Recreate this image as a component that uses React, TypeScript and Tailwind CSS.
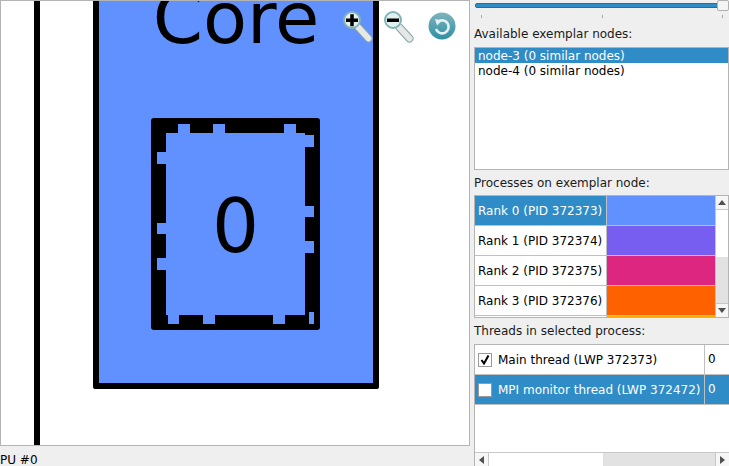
const F = "font-['DejaVu_Sans',sans-serif]";

const notches = [
  [178, 124, 12, 9], [213, 124, 12, 9], [284, 124, 12, 9],
  [157, 152, 9, 12], [157, 223, 9, 11], [157, 258, 9, 12],
  [305, 135, 9, 12], [305, 206, 9, 11], [305, 241, 9, 12],
  [168, 315, 11, 9], [203, 315, 12, 9], [273, 315, 12, 9], [309, 312, 5, 12],
];

function Lens({ minus }: { minus?: boolean }) {
  return (
    <svg width="32" height="34" viewBox="0 0 32 34" className="block">
      <path d="M16.5 17.5 L26.5 28.5" stroke="#7fa3a8" strokeWidth="8" strokeLinecap="round" />
      <path d="M16.5 17.5 L26.5 28.5" stroke="#e6e8e6" strokeWidth="6" strokeLinecap="round" />
      <circle cx="10" cy="10" r="8" fill="#e3f0f0" stroke="#84b4b9" strokeWidth="2" />
      <rect x="4" y="8.5" width="12" height="3.5" fill="#000" />
      {!minus && <rect x="8.25" y="4.25" width="3.5" height="12" fill="#000" />}
    </svg>
  );
}

function Refresh() {
  return (
    <svg width="28" height="28" viewBox="0 0 28 28" className="block">
      <defs>
        <linearGradient id="g" x1="0" y1="0" x2="0" y2="1">
          <stop offset="0" stopColor="#7fb4bd" />
          <stop offset="1" stopColor="#2f8fa3" />
        </linearGradient>
      </defs>
      <circle cx="14" cy="14" r="13.5" fill="url(#g)" />
      <path d="M10.5 9.5 A6.5 6.5 0 1 1 8 17" fill="none" stroke="#e4f0f2" strokeWidth="2.6" />
      <path d="M7 7 L14 8.5 L9 13.5 Z" fill="#e4f0f2" />
    </svg>
  );
}

function Rank({ n, pid, color, sel }: { n: number; pid: number; color: string; sel?: boolean }) {
  return (
    <div className="flex h-[30px] shrink-0 border-b border-[#c0c0c0]">
      <div className={`w-[132px] border-r border-[#c0c0c0] pl-[3px] leading-[31px] whitespace-nowrap ${sel ? "bg-[#308cc6] text-white" : "bg-white text-black"}`}>
        Rank {n} (PID {pid})
      </div>
      <div className="flex-1" style={{ backgroundColor: color }} />
    </div>
  );
}

function Arrow({ d }: { d: "up" | "down" | "left" | "right" }) {
  const p = { up: "M0 5 L4 0 L8 5 Z", down: "M0 0 L8 0 L4 5 Z", left: "M5 0 L5 8 L0 4 Z", right: "M0 0 L0 8 L5 4 Z" }[d];
  return (
    <svg width={d === "up" || d === "down" ? 8 : 5} height={d === "up" || d === "down" ? 5 : 8} className="block">
      <path d={p} fill="#505050" />
    </svg>
  );
}

function Thread({ label, checked, sel }: { label: string; checked?: boolean; sel?: boolean }) {
  return (
    <div className={`flex h-[30px] shrink-0 border-b border-[#c0c0c0] ${sel ? "bg-[#308cc6] text-white" : "bg-white text-black"}`}>
      <div className="w-[230px] shrink-0 flex items-center border-r border-[#c0c0c0] pl-[3px] whitespace-nowrap">
        <span className="w-[14px] h-[14px] border border-[#9a9a9a] bg-white mr-[6px] shrink-0 flex items-center justify-center">
          {checked && (
            <svg width="10" height="10" viewBox="0 0 10 10">
              <path d="M1.5 5 L4 8.5 L8.5 0.5" fill="none" stroke="#000" strokeWidth="2" />
            </svg>
          )}
        </span>
        {label}
      </div>
      <div className="pl-[3px] leading-[29px]">0</div>
    </div>
  );
}

export default function App() {
  return (
    <div className={`${F} flex w-[729px] h-[466px] overflow-hidden bg-[#efefef] text-[12px] text-[#1a1a1a]`}>
      <div className="w-[470px] shrink-0 flex flex-col">
        <div className="relative h-[446px] bg-white border border-[#b4b4b4] box-border overflow-hidden">
          <div className="absolute left-[33px] top-[-2px] w-[6px] h-[447px] bg-black" />
          <div className="absolute left-[92px] top-[-11px] w-[286px] h-[399px] bg-[#6190ff] border-[6px] border-black rounded-[2px]" />
          <div className="absolute left-[92px] w-[286px] top-[-25px] text-center text-[72px] leading-[84px] text-black">Core</div>
          <div className="absolute left-[150px] top-[117px] w-[169px] h-[212px] bg-black rounded-[3px]" />
          <div className="absolute left-[165px] top-[132px] w-[139px] h-[182px] bg-[#6190ff]" />
          {notches.map(([x, y, w, h], i) => (
            <div key={i} className="absolute bg-[#6190ff]" style={{ left: x - 1, top: y - 1, width: w, height: h }} />
          ))}
          <div className="absolute left-[150px] w-[169px] top-[183px] text-center text-[74px] leading-[84px] text-black">0</div>
          <div className="absolute left-[341px] top-[9px]"><Lens /></div>
          <div className="absolute left-[382px] top-[9px]"><Lens minus /></div>
          <div className="absolute left-[427px] top-[11px]"><Refresh /></div>
        </div>
        <div className="h-[20px] leading-[28px] text-black">PU #0</div>
      </div>

      <div className="flex-1 min-w-0 flex flex-col pl-[4px]">
        <div className="relative h-[25px] shrink-0">
          <div className="absolute left-[1px] right-0 top-[3px] h-[5px] rounded-[2px] bg-[#308cc6] border border-[#1f6f9f]" />
          <div className="absolute right-0 top-0 w-[12px] h-[11px] bg-[#f4f4f4] border border-[#b0b0b0] rounded-[2px]" />
          <div className="absolute left-[7px] top-[15px] w-px h-[3px] bg-[#a8a8a8]" />
          <div className="absolute left-[128px] top-[15px] w-px h-[3px] bg-[#a8a8a8]" />
          <div className="absolute left-[248px] top-[15px] w-px h-[3px] bg-[#a8a8a8]" />
        </div>
        <div className="h-[22px] leading-[16px] pt-[1px] shrink-0">Available exemplar nodes:</div>
        <div className="h-[123px] shrink-0 bg-white border border-[#b4b4b4] text-black">
          <div className="h-[15px] leading-[17px] pl-[3px] bg-[#308cc6] text-white">node-3 (0 similar nodes)</div>
          <div className="h-[15px] leading-[17px] pl-[3px]">node-4 (0 similar nodes)</div>
        </div>
        <div className="h-[25px] leading-[26px] shrink-0">Processes on exemplar node:</div>
        <div className="h-[123px] shrink-0 flex border border-[#b4b4b4] bg-white overflow-hidden">
          <div className="w-[240px] shrink-0 flex flex-col overflow-hidden">
            <Rank n={0} pid={372373} color="#6190ff" sel />
            <Rank n={1} pid={372374} color="#785ef0" />
            <Rank n={2} pid={372375} color="#dc267f" />
            <Rank n={3} pid={372376} color="#fe6100" />
            <div className="flex h-[4px] shrink-0"><div className="w-[132px] bg-white border-r border-[#c0c0c0]" /><div className="flex-1 bg-[#ffb000]" /></div>
          </div>
          <div className="flex-1 flex flex-col border-l border-[#c8c8c8] bg-[#f6f6f6]">
            <div className="h-[14px] flex items-center justify-center border-b border-[#c8c8c8]"><Arrow d="up" /></div>
            <div className="h-[47px] bg-white" />
            <div className="flex-1 bg-[#e2e2e2]" />
            <div className="h-[14px] flex items-center justify-center border-t border-[#c8c8c8]"><Arrow d="down" /></div>
          </div>
        </div>
        <div className="h-[26px] leading-[26px] shrink-0">Threads in selected process:</div>
        <div className="flex-1 min-h-0 flex flex-col border-l border-t border-[#b4b4b4] bg-white overflow-hidden">
          <Thread label="Main thread (LWP 372373)" checked />
          <Thread label="MPI monitor thread (LWP 372472)" sel />
          <div className="flex-1" />
          <div className="h-[14px] shrink-0 flex border-t border-[#c8c8c8] bg-[#f6f6f6]">
            <div className="w-[14px] flex items-center justify-center border-r border-[#c8c8c8]"><Arrow d="left" /></div>
            <div className="w-[114px] bg-white" />
            <div className="flex-1 bg-[#e2e2e2]" />
            <div className="w-[14px] flex items-center justify-center border-l border-[#c8c8c8]"><Arrow d="right" /></div>
          </div>
        </div>
      </div>
    </div>
  );
}
